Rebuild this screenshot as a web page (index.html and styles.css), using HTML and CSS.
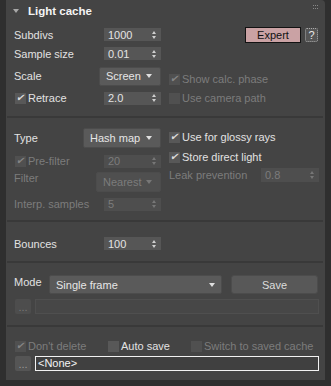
FILE: index.html
```html
<!DOCTYPE html>
<html lang="en">
<head>
    <meta charset="UTF-8">
    <title>Light cache</title>
    <link rel="stylesheet" href="styles.css">
</head>
<body>
    <div class="panel">
        <div class="header">
            <span class="caret"></span>
            <span class="title">Light cache</span>
            <svg class="grip" width="6" height="5" viewBox="0 0 6 5">
                <rect x="0" y="0" width="1" height="1" fill="#888"/><rect x="2" y="0" width="1" height="1" fill="#888"/><rect x="4" y="0" width="1" height="1" fill="#888"/>
                <rect x="0" y="3" width="1" height="1" fill="#888"/><rect x="2" y="3" width="1" height="1" fill="#888"/><rect x="4" y="3" width="1" height="1" fill="#888"/>
            </svg>
        </div>

        <div class="section two s1">
            <div class="col left">
                <div class="row h19"><span class="lbl">Subdivs</span><div class="spin"><span>1000</span><i class="arr"></i></div></div>
                <div class="row h19"><span class="lbl">Sample size</span><div class="spin"><span>0.01</span><i class="arr"></i></div></div>
                <div class="row h26"><span class="lbl">Scale</span><div class="drop w62"><span>Screen</span><i class="tri"></i></div></div>
                <div class="row h18"><label class="chk"><i class="box on"></i>Retrace</label><div class="spin"><span>2.0</span><i class="arr"></i></div></div>
            </div>
            <div class="col right">
                <div class="row h19 btns"><button class="expert">Expert</button><button class="help">?</button></div>
                <div class="row h19"></div>
                <div class="row h26 low"><label class="chk off"><i class="box on"></i>Show calc. phase</label></div>
                <div class="row h18"><label class="chk off"><i class="box"></i>Use camera path</label></div>
            </div>
        </div>
        <div class="sep"></div>

        <div class="section two s2">
            <div class="col left">
                <div class="row h24"><span class="lbl">Type</span><div class="drop w78"><span>Hash map</span><i class="tri"></i></div></div>
                <div class="row h22"><label class="chk off"><i class="box on"></i>Pre-filter</label><div class="spin off"><span>20</span><i class="arr"></i></div></div>
                <div class="row h20"><span class="lbl off up">Filter</span><div class="drop w65 off"><span>Nearest</span><i class="tri"></i></div></div>
                <div class="row h24"><span class="lbl off">Interp. samples</span><div class="spin off"><span>5</span><i class="arr"></i></div></div>
            </div>
            <div class="col right">
                <div class="row h22"><label class="chk"><i class="box on"></i>Use for glossy rays</label></div>
                <div class="row h18"><label class="chk"><i class="box on"></i>Store direct light</label></div>
                <div class="row h18"><span class="lbl off">Leak prevention</span><div class="spin w58 off"><span>0.8</span><i class="arr"></i></div></div>
            </div>
        </div>
        <div class="sep"></div>

        <div class="section s3">
            <div class="row h19 half"><span class="lbl">Bounces</span><div class="spin"><span>100</span><i class="arr"></i></div></div>
        </div>
        <div class="sep"></div>

        <div class="section s4">
            <div class="row h19">
                <span class="lbl mode">Mode</span>
                <div class="drop wide"><span>Single frame</span><i class="tri"></i></div>
                <button class="save">Save</button>
            </div>
            <div class="row h15">
                <button class="dots off">...</button>
                <div class="field"></div>
            </div>
        </div>
        <div class="sep"></div>

        <div class="section s5">
            <div class="row h14">
                <label class="chk off c1"><i class="box on"></i>Don't delete</label>
                <label class="chk c2"><i class="box"></i>Auto save</label>
                <label class="chk off"><i class="box"></i>Switch to saved cache</label>
            </div>
            <div class="row h15">
                <button class="dots">...</button>
                <div class="field file">&lt;None&gt;</div>
            </div>
        </div>
    </div>
</body>
</html>
```

FILE: styles.css
```css
body {
    margin: 0;
    background-color: #2f2f2f;
    font-family: 'Liberation Sans', Arial, sans-serif;
    font-size: 11px;
    color: #e2e2e2;
}

.panel {
    margin-left: 6px;
    width: 319px;
    height: 380px;
    background-color: #444444;
    border-radius: 0 4px 0 0;
    box-sizing: border-box;
    overflow: hidden;
}

.header {
    height: 20px;
    display: flex;
    align-items: center;
    padding: 2px 0 0 7px;
    box-sizing: border-box;
}

    .header .caret {
        width: 0;
        height: 0;
        border-left: 3px solid transparent;
        border-right: 3px solid transparent;
        border-top: 4px solid #a8a8a8;
        margin-right: 9px;
    }

    .header .title {
        font-weight: bold;
        font-size: 11.5px;
        color: #f4f4f4;
    }

    .header .grip {
        margin-left: auto;
        margin-right: 6px;
        margin-top: -8px;
    }

.sep {
    height: 2px;
    margin: 0 2px 0 1px;
    background-color: #393939;
}

.section {
    padding: 0 6px 0 8px;
}

.two {
    display: flex;
    gap: 8px;
}

.col {
    display: flex;
    flex-direction: column;
}

.left {
    width: 147px;
}

.right {
    width: 150px;
}

.s1 {
    padding-top: 5px;
    height: 96px;
    box-sizing: border-box;
}

.s2 {
    padding-top: 8px;
    height: 102px;
    box-sizing: border-box;
}

.s3 {
    padding-top: 12px;
    height: 39px;
    box-sizing: border-box;
}

.s4 {
    padding-top: 12px;
    height: 62px;
    box-sizing: border-box;
    display: flex;
    flex-direction: column;
    gap: 5px;
}

.s5 {
    padding-top: 12px;
    display: flex;
    flex-direction: column;
    gap: 3px;
}

.row {
    display: flex;
    align-items: center;
    justify-content: space-between;
}

.h14 { height: 14px; }
.h15 { height: 15px; }
.h18 { height: 18px; }
.h19 { height: 19px; }
.h20 { height: 20px; }
.h22 { height: 22px; }
.h24 { height: 24px; }
.h26 { height: 26px; }

.low {
    padding-top: 6px;
    box-sizing: border-box;
}

.half {
    width: 147px;
}

.lbl {
    white-space: nowrap;
}

    .lbl.up {
        margin-bottom: 8px;
    }

.off {
    color: #7c7c7c;
}

/* spinner */
.spin {
    width: 57px;
    height: 13px;
    background-color: #565656;
    display: flex;
    align-items: center;
    justify-content: space-between;
    padding: 0 4px 0 4px;
    box-sizing: border-box;
    color: #e4e4e4;
}

    .spin.w58 {
        width: 58px;
        height: 14px;
    }

    .spin.off {
        background-color: #4e4e4e;
        color: #7c7c7c;
    }

    .spin .arr {
        width: 5px;
        height: 8px;
        position: relative;
    }

        .spin .arr::before, .spin .arr::after {
            content: "";
            position: absolute;
            left: 0;
            border-left: 2.5px solid transparent;
            border-right: 2.5px solid transparent;
        }

        .spin .arr::before {
            top: 0;
            border-bottom: 3px solid #cfcfcf;
        }

        .spin .arr::after {
            bottom: 0;
            border-top: 3px solid #cfcfcf;
        }

    .spin.off .arr::before {
        border-bottom-color: #777;
    }

    .spin.off .arr::after {
        border-top-color: #777;
    }

/* dropdown */
.drop {
    height: 19px;
    background-color: #5a5a5a;
    border: 1px solid #4c4c4c;
    border-radius: 2px;
    display: flex;
    align-items: center;
    justify-content: space-between;
    padding: 0 8px 0 6px;
    box-sizing: border-box;
    color: #e6e6e6;
}

    .drop.w62 { width: 62px; }
    .drop.w78 { width: 78px; height: 20px; }
    .drop.w65 { width: 65px; height: 20px; }

    .drop.off {
        background-color: #4f4f4f;
        color: #7c7c7c;
    }

    .drop .tri {
        width: 0;
        height: 0;
        border-left: 3.5px solid transparent;
        border-right: 3.5px solid transparent;
        border-top: 4px solid #e0e0e0;
    }

    .drop.off .tri {
        border-top-color: #777;
    }

    .drop.wide {
        width: 173px;
        margin-left: auto;
        padding-left: 6px;
        padding-right: 6px;
    }

/* checkbox */
.chk {
    display: flex;
    align-items: center;
    white-space: nowrap;
}

    .chk .box {
        width: 11px;
        height: 11px;
        background-color: #585858;
        margin: 0 2px 0 0;
        position: relative;
    }

    .left .chk .box, .s5 .chk .box {
        margin-left: 1px;
    }

    .chk .box.on::after {
        content: "✔";
        position: absolute;
        left: 1px;
        top: -1px;
        font-size: 10px;
        color: #dcdcdc;
    }

    .chk.off .box {
        background-color: #505050;
    }

        .chk.off .box.on::after {
            color: #858585;
        }

.c1 { width: 93px; }
.c2 { width: 83px; }

.s5 .row {
    justify-content: flex-start;
}

/* buttons */
button {
    font-family: inherit;
    font-size: 11px;
    padding: 0;
    cursor: pointer;
}

.btns {
    justify-content: flex-end;
    gap: 4px;
}

.expert {
    margin-left: auto;
    width: 56px;
    height: 16px;
    background-color: #caa2a4;
    border: 1px solid #111;
    color: #111;
}

.help {
    width: 13px;
    height: 14px;
    background-color: #555;
    border: 1px dotted #aaa;
    border-radius: 2px;
    color: #e8e8e8;
    margin-right: 1px;
}

.save {
    width: 87px;
    height: 19px;
    margin-left: 9px;
    margin-right: 1px;
    background-color: #585858;
    border: 1px solid #4c4c4c;
    border-radius: 3px;
    color: #dcdcdc;
}

.mode {
    margin-bottom: 6px;
}

.dots {
    width: 16px;
    height: 15px;
    margin-left: 1px;
    background-color: #555;
    border: none;
    border-radius: 2px;
    color: #9a9a9a;
    line-height: 10px;
}

    .dots.off {
        background-color: #4d4d4d;
        color: #777;
    }

.field {
    margin-left: 4px;
    flex: 1;
    height: 15px;
    background-color: #474747;
    border: 1px solid #4f4f4f;
    box-sizing: border-box;
}

    .field.file {
        background-color: #404040;
        border-color: #f2f2f2;
        color: #f4f4f4;
        line-height: 13px;
        padding-left: 2px;
    }
```
